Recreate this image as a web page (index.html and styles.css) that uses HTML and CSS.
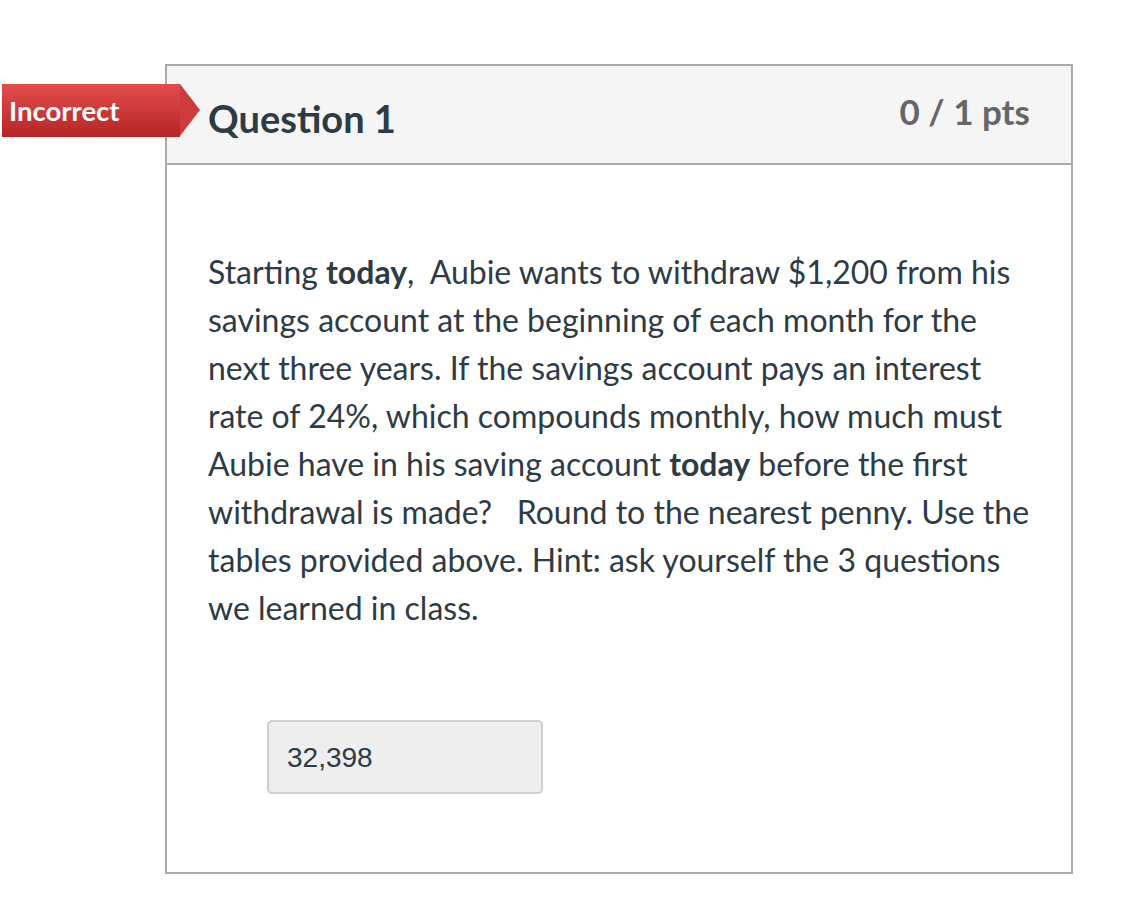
FILE: index.html
```html
<!DOCTYPE html>
<html>
<head>
<meta charset="utf-8">
<link rel="stylesheet" href="styles.css">
</head>
<body>
<div class="page">
  <div class="question">
    <div class="flag">Incorrect</div>
    <div class="header">
      <h2 class="title">Question 1</h2>
      <div class="pts">0 / 1 pts</div>
    </div>
    <div class="content">
      <p class="text">Starting <b>today</b>,&nbsp; Aubie wants to withdraw $1,200 from his savings account at the beginning of each month for the next three years. If the savings account pays an interest rate of 24%, which compounds monthly, how much must Aubie have in his saving account <b>today</b> before the first withdrawal is made?&nbsp;&nbsp; Round to the nearest penny. Use the tables provided above. Hint: ask yourself the 3 questions we learned in class.</p>
      <div class="answer">32,398</div>
    </div>
  </div>
</div>
</body>
</html>
```
FILE: styles.css
```css
html, body { margin: 0; padding: 0; background: #fff; }
body { font-family: Lato, "Liberation Sans", sans-serif; color: #2d3b45; }
.page { padding: 64px 0 0 165px; width: 908px; }
.question {
  position: relative;
  border: 2px solid #aaaaaa;
  height: 810px;
  box-sizing: border-box;
}
.flag {
  position: absolute;
  left: -165px;
  top: 18px;
  height: 53px;
  width: 178px;
  box-sizing: border-box;
  padding-left: 7px;
  line-height: 53px;
  font-size: 27.5px;
  font-weight: bold;
  color: #fff;
  background: linear-gradient(#e44c4c, #b42626);
  z-index: 2;
}
.flag::after {
  content: "";
  position: absolute;
  right: -20px;
  top: 0;
  border-top: 26.5px solid transparent;
  border-bottom: 26.5px solid transparent;
  border-left: 20px solid #cd3b3b;
}
.header {
  background: #f5f5f5;
  border-bottom: 2px solid #aaaaaa;
  height: 99px;
  box-sizing: border-box;
  display: flex;
  justify-content: space-between;
  padding: 0 41px 0 41px;
}
.title {
  margin: 0;
  padding-top: 29px;
  font-size: 38px;
  font-weight: bold;
  color: #2d3b45;
}
.pts {
  padding-top: 24px;
  font-size: 35px;
  font-weight: bold;
  color: #666;
}
.content { padding: 83px 41px 0 41px; }
.text {
  margin: 0;
  font-size: 32px;
  line-height: 48px;
}
.text b { font-weight: bold; }
.answer {
  margin: 88px 0 0 59px;
  width: 276px;
  height: 74px;
  box-sizing: border-box;
  border: 2px solid #cfcfcf;
  border-radius: 5px;
  background: #eeeeee;
  padding: 0 0 0 18px;
  line-height: 72px;
  font-family: "Liberation Sans", Arial, sans-serif;
  font-size: 28px;
  color: #2d3b45;
}
```
